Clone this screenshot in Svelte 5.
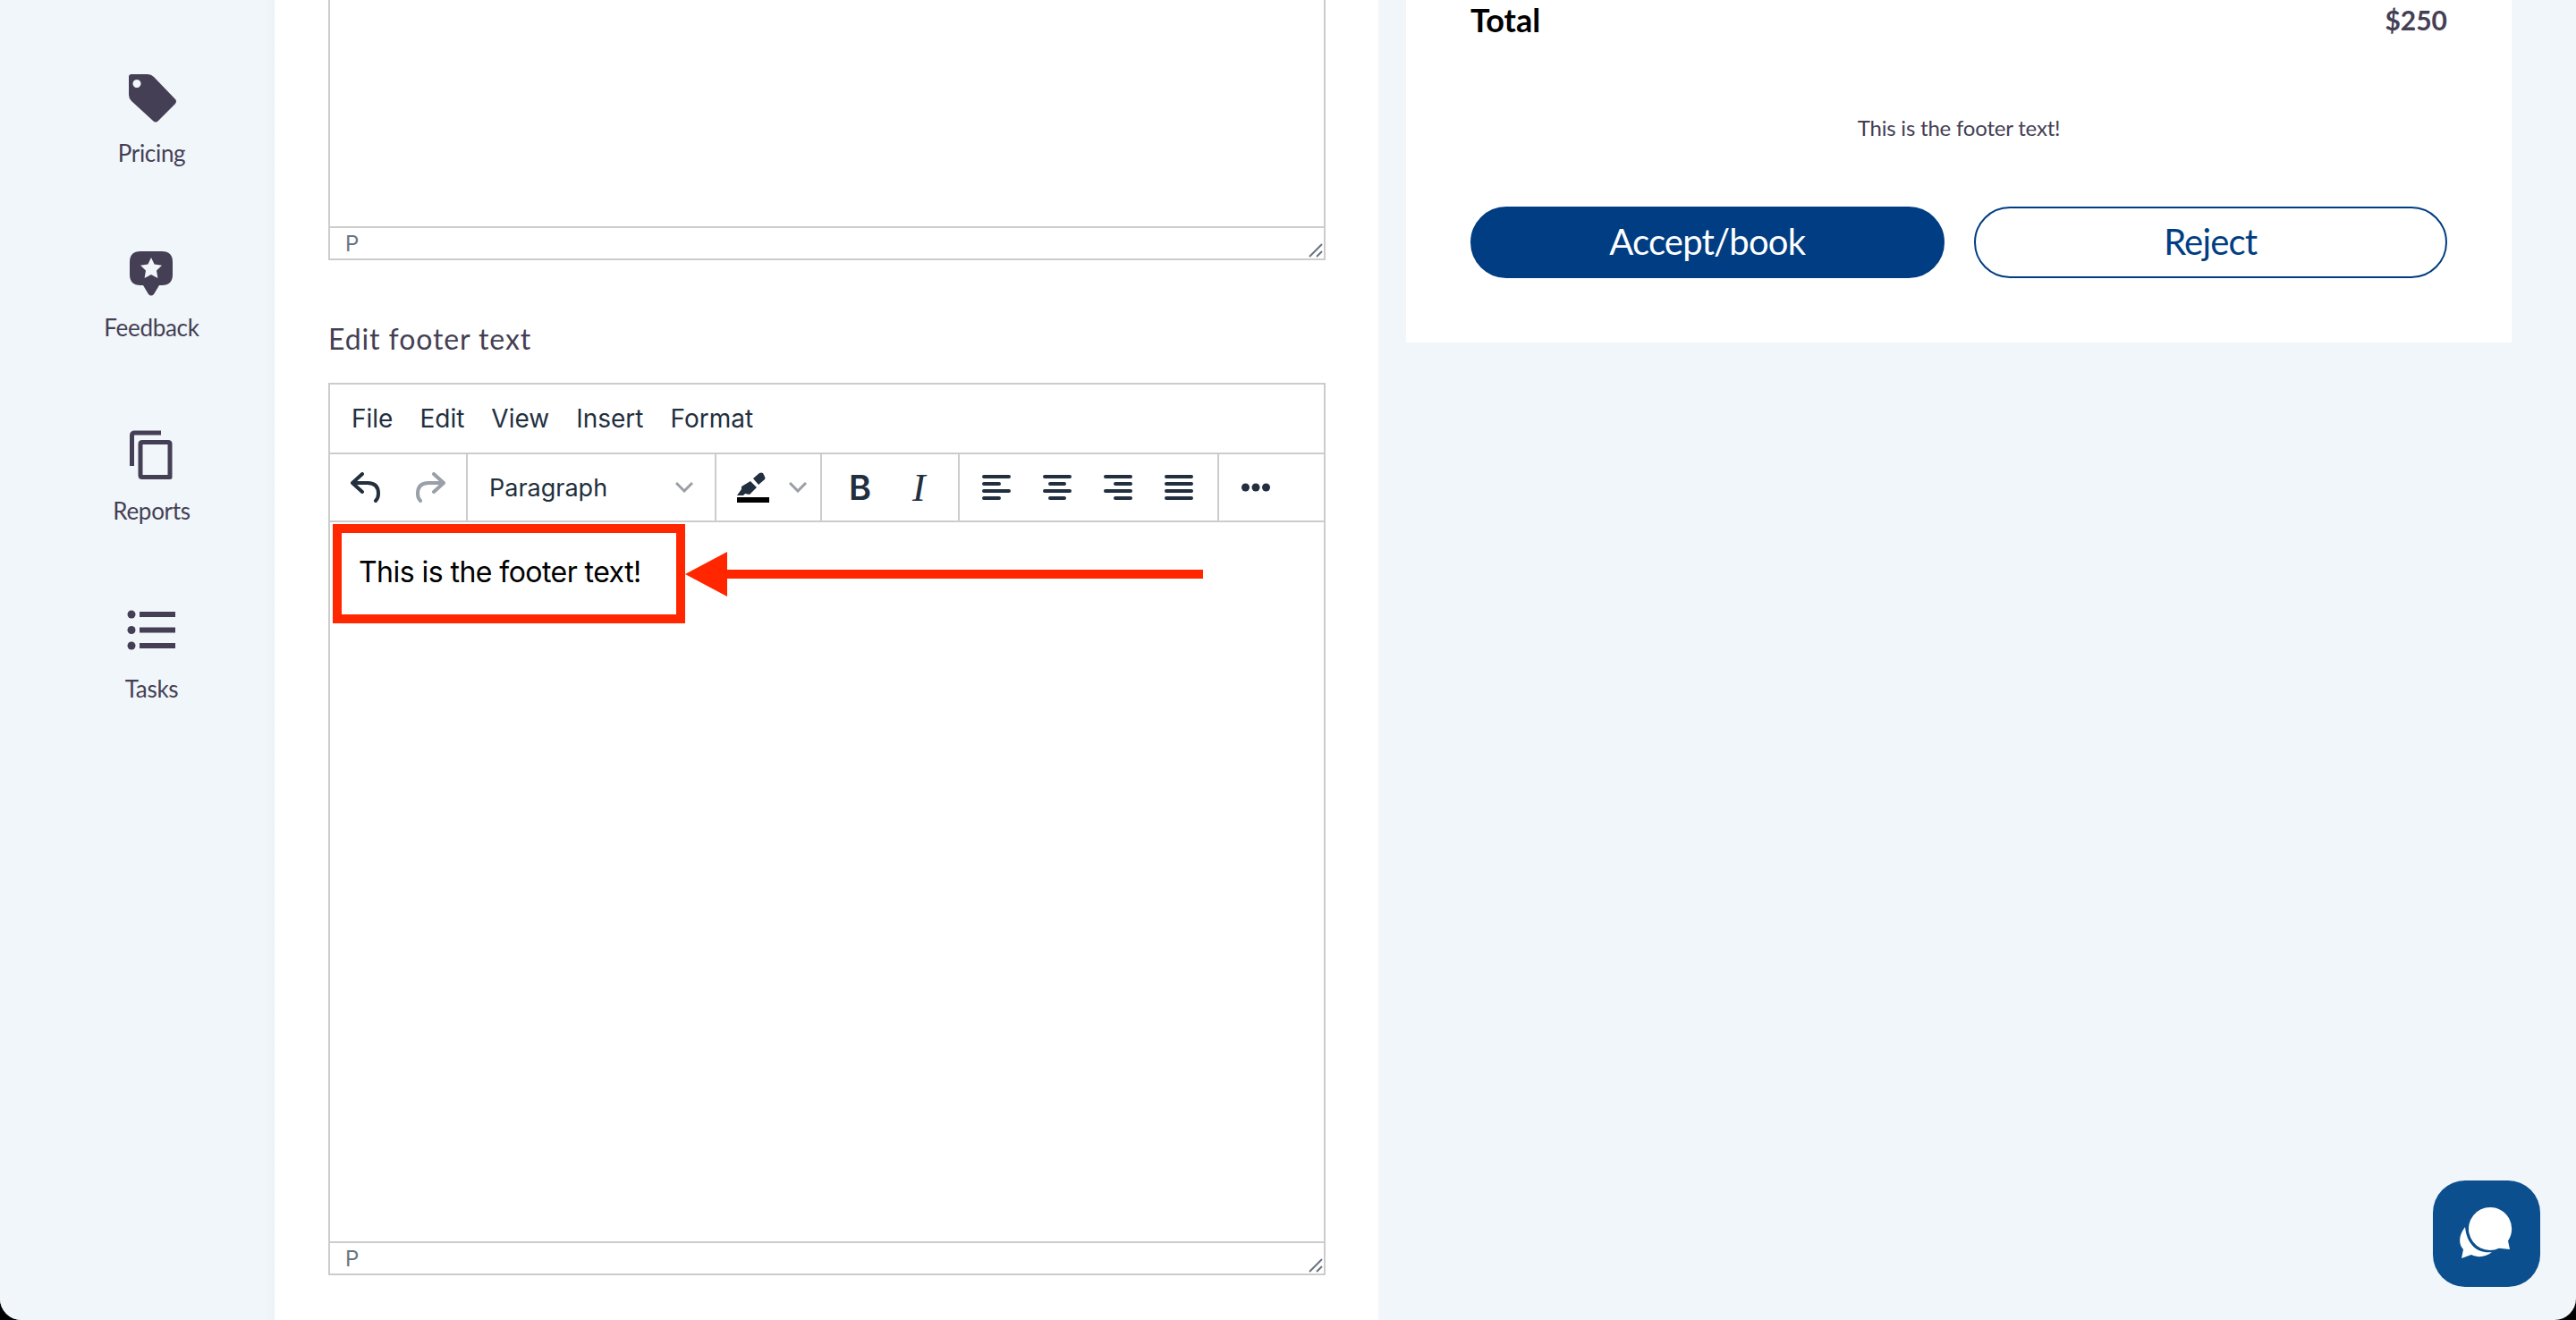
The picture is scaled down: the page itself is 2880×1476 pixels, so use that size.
<script>
    const navItems = [
        { label: 'Pricing', icon: 'tag' },
        { label: 'Feedback', icon: 'feedback' },
        { label: 'Reports', icon: 'reports' },
        { label: 'Tasks', icon: 'tasks' }
    ];
    const menus = ['File', 'Edit', 'View', 'Insert', 'Format'];
    const aligns = [
        'M2 2h28M2 10h17M2 18h28M2 26h17',
        'M2 2h28M8 10h16M2 18h28M8 26h16',
        'M2 2h28M13 10h17M2 18h28M13 26h17',
        'M2 2h28M2 10h28M2 18h28M2 26h28'
    ];
</script>

<div class="page">
    <aside class="sidebar">
        {#each navItems as item}
            <div class="nav-item {item.icon}">
                <svg class="nav-icon" viewBox="0 0 60 60" width="60" height="60" aria-hidden="true">
                    {#if item.icon === 'tag'}
                        <path fill="#453f55" fill-rule="evenodd" d="M7 3h18q4 0 7 3l24 25q2 2 0 5L37 55q-3 3-6 0L7 33q-3-3-3-7V6q0-3 3-3zm6 6a4.500 4.500 0 1 0 .01 0z"/>
                    {:else if item.icon === 'feedback'}
                        <path fill="#453f55" d="M18 5h24q12 0 12 12v14q0 12-12 12h-3l-6 10q-3 3-6 0l-6-10h-3Q6 43 6 31V17Q6 5 18 5z"/>
                        <path fill="#f1f6fa" d="M30 12l3.600 7.500 8.400 1.200-6 5.800 1.400 8.500-7.400-4-7.400 4 1.400-8.500-6-5.800 8.400-1.200z"/>
                    {:else if item.icon === 'reports'}
                        <path fill="none" stroke="#453f55" stroke-width="5" stroke-linejoin="round" d="M19 15.500h29q2 0 2 2v37H19q-2 0-2-2v-35q0-2 2-2z"/>
                        <path fill="none" stroke="#453f55" stroke-width="5" d="M7.500 42V8q0-3 3-3H40"/>
                    {:else}
                        <circle cx="7" cy="10" r="4.500" fill="#453f55"/>
                        <circle cx="7" cy="27.500" r="4.500" fill="#453f55"/>
                        <circle cx="7" cy="45" r="4.500" fill="#453f55"/>
                        <path stroke="#453f55" stroke-width="6" d="M16 10h40M16 27.500h40M16 45h40"/>
                    {/if}
                </svg>
                <span>{item.label}</span>
            </div>
        {/each}
    </aside>

    <main class="main">
        <section class="editor first">
            <div class="edit-area"></div>
            <div class="status">
                <span>P</span>
                <svg viewBox="0 0 16 16" width="16" height="16"><path stroke="#6a7480" stroke-width="2" d="M1 15L15 1M9 15l6-6"/></svg>
            </div>
        </section>

        <h2 class="field-title">Edit footer text</h2>

        <section class="editor second">
            <div class="menubar">
                {#each menus as menu}
                    <span>{menu}</span>
                {/each}
            </div>
            <div class="toolbar">
                <div class="group history">
                    <svg viewBox="0 0 34 34" width="34" height="34"><path fill="none" stroke="#222f3e" stroke-width="4" stroke-linecap="round" stroke-linejoin="round" d="M13 2L2 12l11 10M3 12h16q12 0 12 12 0 5-3 8"/></svg>
                    <svg viewBox="0 0 34 34" width="34" height="34"><path fill="none" stroke="#9aa0a8" stroke-width="4" stroke-linecap="round" stroke-linejoin="round" d="M21 2l11 10-11 10M31 12H15Q3 12 3 24q0 5 3 8"/></svg>
                </div>
                <div class="group style">
                    <span>Paragraph</span>
                    <svg class="chev" viewBox="0 0 20 12" width="20" height="12"><path fill="none" stroke="#9a9ea5" stroke-width="3" d="M1 1l9 9 9-9"/></svg>
                </div>
                <div class="group color">
                    <svg viewBox="0 0 36 34" width="36" height="34">
                        <path fill="#222f3e" d="M18 7l7-6q2-1 4 0l2 4q1 2 0 3l-7 6z"/>
                        <path fill="#222f3e" d="M15 10l7 7-8 8-5-1-2 2H0l5-7v-3z"/>
                        <rect x="0" y="28" width="36" height="6" fill="#000"/>
                    </svg>
                    <svg class="chev" viewBox="0 0 20 12" width="20" height="12"><path fill="none" stroke="#9a9ea5" stroke-width="3" d="M1 1l9 9 9-9"/></svg>
                </div>
                <div class="group format">
                    <b>B</b>
                    <i>I</i>
                </div>
                <div class="group align">
                    {#each aligns as d}
                        <svg viewBox="0 0 32 28" width="32" height="28"><path fill="none" stroke="#222f3e" stroke-width="4" stroke-linecap="round" d={d}/></svg>
                    {/each}
                </div>
                <div class="group more">
                    <svg viewBox="0 0 32 10" width="32" height="10"><circle cx="4.500" cy="5" r="4.500" fill="#222f3e"/><circle cx="16" cy="5" r="4.500" fill="#222f3e"/><circle cx="27.500" cy="5" r="4.500" fill="#222f3e"/></svg>
                </div>
            </div>
            <div class="edit-area">
                <p class="highlight">This is the footer text!</p>
                <div class="arrow">
                    <span class="arrow-head"></span>
                    <span class="arrow-line"></span>
                </div>
            </div>
            <div class="status">
                <span>P</span>
                <svg viewBox="0 0 16 16" width="16" height="16"><path stroke="#6a7480" stroke-width="2" d="M1 15L15 1M9 15l6-6"/></svg>
            </div>
        </section>
    </main>

    <div class="right">
        <section class="card">
            <div class="total">
                <strong>Total</strong>
                <span>$250</span>
            </div>
            <p class="footer-text">This is the footer text!</p>
            <div class="buttons">
                <button class="accept">Accept/book</button>
                <button class="reject">Reject</button>
            </div>
        </section>
    </div>

    <button class="chat" aria-label="chat">
        <svg viewBox="0 0 60 60" width="60" height="60">
            <path fill="#fff" d="M6 22C-2 32-1 42 4 47L2 57l11-4c8 4 17 2 23-3C20 52 8 42 6 22z"/>
            <path fill="#fff" d="M34 0a24 24 0 0 1 20 37.500L56 47l-12-1.200A24 24 0 1 1 34 0z"/>
        </svg>
    </button>
</div>

<style>
    /* the screenshot shows the rounded window corners at the bottom */
    :global(body) {
        background: #000;
    }
    .page {
        display: flex;
        width: 2880px;
        height: 1476px;
        overflow: hidden;
        border-radius: 0 0 24px 24px;
        font-family: "Lato", "Liberation Sans", sans-serif;
        color: #453f55;
        background: #f1f6fa;
    }

    /* sidebar */
    .sidebar {
        width: 307px;
        flex-shrink: 0;
        display: flex;
        flex-direction: column;
        align-items: center;
        padding: 80px 0 0 32px;
        box-sizing: border-box;
        background: linear-gradient(to right, #f1f6fa 96%, #edf2f6 100%);
    }
    .nav-item {
        display: flex;
        flex-direction: column;
        align-items: center;
        height: 60px;
        font-size: 26px;
        letter-spacing: -0.3px;
        line-height: 34px;
    }
    .nav-icon {
        flex-shrink: 0;
    }
    .nav-item span {
        margin-top: 14px;
    }
    .feedback { margin-top: 136px; }
    .feedback span { margin-top: 13px; }
    .reports { margin-top: 143px; }
    .reports span { margin-top: 15px; }
    .tasks { margin-top: 138px; }
    .tasks span { margin-top: 16px; }

    /* main column */
    .main {
        width: 1234px;
        flex-shrink: 0;
        background: #fff;
        padding-left: 60px;
        box-sizing: border-box;
    }
    .editor {
        width: 1115px;
        box-sizing: border-box;
        border: 2px solid #ccc;
        display: flex;
        flex-direction: column;
        font-family: "Inter", "Liberation Sans", sans-serif;
    }
    .editor.first {
        height: 291px;
        border-top: none;
    }
    .editor.second {
        height: 998px;
    }
    .edit-area {
        flex: 1;
        position: relative;
    }
    .status {
        height: 33px;
        border-top: 2px solid #ccc;
        display: flex;
        justify-content: space-between;
        align-items: flex-end;
        padding: 0 1px 1px 17px;
        color: #6a7480;
        font-size: 24px;
        line-height: 34px;
    }
    .status span {
        align-self: center;
        padding-top: 3px;
    }
    .field-title {
        margin: 69px 0 30px;
        font-size: 32px;
        line-height: 38px;
        font-weight: 400;
        letter-spacing: 0.9px;
    }

    /* tinymce-like bars */
    .menubar {
        height: 76px;
        display: flex;
        align-items: center;
        gap: 30px;
        padding-left: 24px;
        font-size: 28px;
        color: #222f3e;
    }
    .toolbar {
        height: 78px;
        display: flex;
        border-top: 2px solid #ccc;
        border-bottom: 2px solid #ccc;
        box-sizing: border-box;
        color: #222f3e;
    }
    .group {
        display: flex;
        align-items: center;
        border-right: 2px solid #ccc;
        box-sizing: border-box;
    }
    .history {
        width: 154px;
        padding-left: 23px;
        gap: 38px;
    }
    .style {
        width: 278px;
        padding-left: 24px;
        font-size: 27px;
    }
    .style .chev {
        margin-left: 76px;
    }
    .color {
        width: 118px;
        padding-left: 23px;
    }
    .color .chev {
        margin-left: 22px;
    }
    .format {
        width: 154px;
        padding-left: 30px;
    }
    .format b {
        width: 71px;
        font-size: 38px;
        font-weight: 600;
    }
    .format i {
        font-family: "Liberation Serif", serif;
        font-size: 44px;
    }
    .align {
        width: 290px;
        padding-left: 25px;
        gap: 36px;
    }
    .more {
        border-right: none;
        padding-left: 25px;
    }

    /* red annotation */
    .highlight {
        margin: 0;
        position: absolute;
        left: 3px;
        top: 2px;
        width: 394px;
        height: 111px;
        box-sizing: border-box;
        border: 10px solid #ff2600;
        padding-left: 19px;
        font-size: 32px;
        letter-spacing: -0.55px;
        line-height: 87px;
        color: #000;
        white-space: nowrap;
    }
    .arrow {
        position: absolute;
        left: 397px;
        top: 33px;
        display: flex;
        align-items: center;
        height: 50px;
    }
    .arrow-head {
        width: 0;
        height: 0;
        border-top: 25px solid transparent;
        border-bottom: 25px solid transparent;
        border-right: 47px solid #ff2600;
    }
    .arrow-line {
        width: 532px;
        height: 10px;
        background: #ff2600;
    }

    /* right column */
    .right {
        flex: 1;
        padding-left: 31px;
    }
    .card {
        width: 1236px;
        height: 383px;
        background: #fff;
        box-sizing: border-box;
        padding: 2px 72px 0 72px;
    }
    .total {
        display: flex;
        justify-content: space-between;
        align-items: center;
        height: 40px;
        font-size: 32px;
        line-height: 34px;
    }
    .total strong {
        color: #000;
        font-size: 36px;
    }
    .total span {
        font-weight: 700;
        font-size: 30px;
    }
    .footer-text {
        margin: 84px 0 0;
        text-align: center;
        font-size: 24px;
        letter-spacing: -0.2px;
        line-height: 34px;
    }
    .buttons {
        display: flex;
        gap: 33px;
        margin-top: 71px;
    }
    .buttons button {
        flex: 1;
        height: 80px;
        border-radius: 40px;
        border: 2px solid #003d82;
        padding: 0 0 3px;
        font: 400 40px "Lato", "Liberation Sans", sans-serif;
        letter-spacing: -0.8px;
    }
    .accept {
        background: #003d82;
        color: #fff;
    }
    .reject {
        background: #fff;
        color: #003d82;
    }

    /* floating chat */
    .chat {
        position: fixed;
        left: 2720px;
        top: 1320px;
        width: 120px;
        height: 119px;
        border: none;
        border-radius: 36px;
        background: #0b4f8f;
        display: flex;
        align-items: center;
        justify-content: center;
        padding: 0;
    }
</style>
